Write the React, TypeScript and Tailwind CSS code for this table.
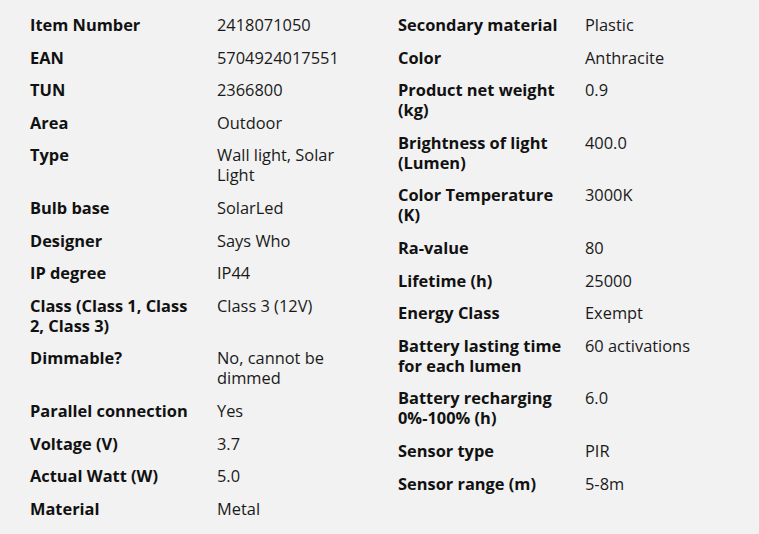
import React from 'react';

const left: [string, string][] = [
  ['Item Number', '2418071050'],
  ['EAN', '5704924017551'],
  ['TUN', '2366800'],
  ['Area', 'Outdoor'],
  ['Type', 'Wall light, Solar Light'],
  ['Bulb base', 'SolarLed'],
  ['Designer', 'Says Who'],
  ['IP degree', 'IP44'],
  ['Class (Class 1, Class 2, Class 3)', 'Class 3 (12V)'],
  ['Dimmable?', 'No, cannot be dimmed'],
  ['Parallel connection', 'Yes'],
  ['Voltage (V)', '3.7'],
  ['Actual Watt (W)', '5.0'],
  ['Material', 'Metal'],
];

const right: [string, string][] = [
  ['Secondary material', 'Plastic'],
  ['Color', 'Anthracite'],
  ['Product net weight (kg)', '0.9'],
  ['Brightness of light (Lumen)', '400.0'],
  ['Color Temperature (K)', '3000K'],
  ['Ra-value', '80'],
  ['Lifetime (h)', '25000'],
  ['Energy Class', 'Exempt'],
  ['Battery lasting time for each lumen', '60 activations'],
  ['Battery recharging 0%-100% (h)', '6.0'],
  ['Sensor type', 'PIR'],
  ['Sensor range (m)', '5-8m'],
];

const SpecList = ({ rows }: { rows: [string, string][] }) => (
  <div className="flex flex-col gap-y-[12.6px]">
    {rows.map(([label, value]) => (
      <div key={label} className="grid grid-cols-[187px_150px]">
        <div className="font-bold text-[#111111] pr-[14px]">{label}</div>
        <div className="text-[#1a1a1a]">{value}</div>
      </div>
    ))}
  </div>
);

export default function App() {
  return (
    <div
      className="w-[759px] h-[534px] bg-[#f2f2f2] overflow-hidden text-[16.4px] leading-[20px]"
      style={{ fontFamily: '"Open Sans", "Noto Sans", Arial, sans-serif' }}
    >
      <div className="grid grid-cols-[368px_1fr] pl-[30px] pt-[15px]">
        <SpecList rows={left} />
        <SpecList rows={right} />
      </div>
    </div>
  );
}
